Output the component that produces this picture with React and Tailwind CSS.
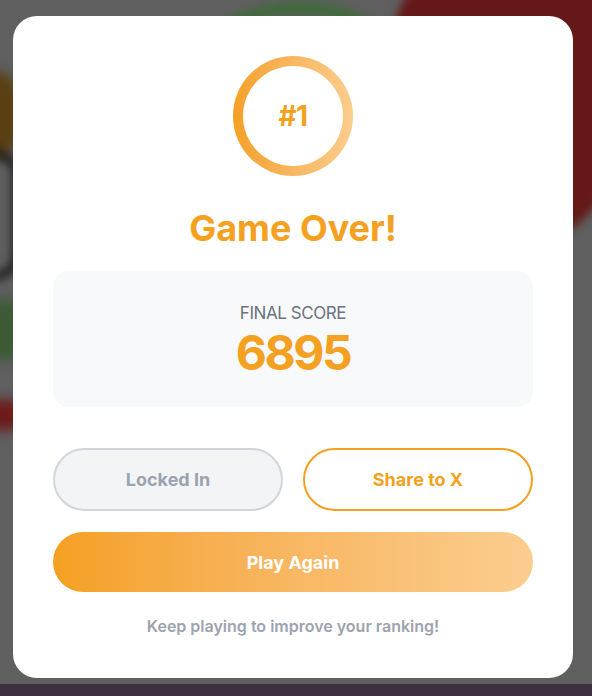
import React from 'react';

const App = () => {
  return (
    <div className="relative w-[592px] h-[696px] overflow-hidden bg-[#5f5f5f]" style={{ fontFamily: 'Inter, "Noto Sans", sans-serif' }}>
      {/* Blurred game board behind the overlay */}
      <div className="absolute left-[140px] top-[2px] w-[320px] h-[320px] rounded-full border-[12px] border-[#3e6a3a] blur-[4px]" />
      <div className="absolute left-[390px] top-[-60px] w-[230px] h-[310px] rounded-full bg-[#651818] blur-[5px]" />
      <div className="absolute left-[-40px] top-[70px] w-[60px] h-[90px] rounded-full bg-[#5a3f12] blur-[6px]" />
      <div className="absolute left-[-30px] top-[150px] w-[50px] h-[130px] rounded-full border-[8px] border-[#1a1a1a] blur-[5px]" />
      <div className="absolute left-[-10px] top-[300px] w-[30px] h-[60px] bg-[#3d5a35] blur-[6px]" />
      <div className="absolute left-[-20px] top-[400px] w-[40px] h-[30px] bg-[#6e1a1a] blur-[6px]" />
      <div className="absolute left-0 bottom-0 w-full h-[12px] bg-[#3e3040]" />

      <div className="relative ml-[13px] mt-[16px] w-[560px] h-[662px] bg-white rounded-[24px] px-[40px] pt-[40px] flex flex-col items-center">
        <div className="w-[120px] h-[120px] rounded-full p-[10px] bg-gradient-to-r from-[#f4a020] to-[#fbcd8c]">
          <div className="w-full h-full rounded-full bg-white flex items-center justify-center">
            <span className="text-[28px] font-bold text-[#f4a020] tracking-tight">#1</span>
          </div>
        </div>

        <h1 className="mt-[32px] text-[36px] leading-[40px] font-bold text-[#f4a020]">Game Over!</h1>

        <div className="mt-[23px] w-full h-[136px] rounded-[16px] bg-[#f8f9fb] flex flex-col items-center pt-[30px]">
          <div className="text-[17px] leading-[24px] text-[#6b7280] tracking-tight">FINAL SCORE</div>
          <div className="mt-[4px] text-[48px] leading-[48px] font-bold text-[#f4a020] tracking-[-0.05em]">6895</div>
        </div>

        <div className="mt-[41px] w-full grid grid-cols-2 gap-[20px]">
          <button className="h-[63px] rounded-full border-2 border-[#d1d5db] bg-[#f3f4f6] text-[18px] font-bold text-[#9ca3af]">
            Locked In
          </button>
          <button className="h-[63px] rounded-full border-2 border-[#f4a020] bg-white text-[18px] font-bold text-[#f4a020]">
            Share to X
          </button>
        </div>

        <button className="mt-[21px] w-full h-[60px] rounded-full bg-gradient-to-r from-[#f4a020] to-[#fbcd8f] text-[18px] font-bold text-white">
          Play Again
        </button>

        <p className="mt-[22px] text-[16px] leading-[24px] font-semibold text-[#9ca3af]">
          Keep playing to improve your ranking!
        </p>
      </div>
    </div>
  );
};

export default App;
